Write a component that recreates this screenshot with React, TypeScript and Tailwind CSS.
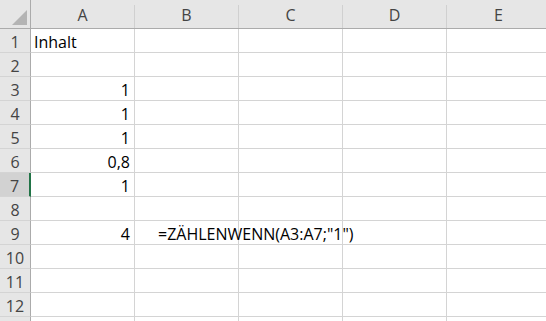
import React from 'react';

const cols = ['A', 'B', 'C', 'D', 'E'];

// row number -> [A, B]
const data: Record<number, { a?: string; aRight?: boolean; b?: string }> = {
    1: { a: 'Inhalt' },
    3: { a: '1', aRight: true },
    4: { a: '1', aRight: true },
    5: { a: '1', aRight: true },
    6: { a: '0,8', aRight: true },
    7: { a: '1', aRight: true },
    9: { a: '4', aRight: true, b: '=ZÄHLENWENN(A3:A7;"1")' },
};

const rows = Array.from({ length: 13 }, (_, i) => i + 1);

export default function App() {
    return (
        <div
            className="w-[546px] h-[321px] overflow-hidden bg-white text-[16px] text-black"
            style={{ fontFamily: '"Open Sans", "Liberation Sans", sans-serif' }}
        >
            <div className="grid grid-cols-[31px_104px_104px_104px_104px_104px] grid-rows-[29px] auto-rows-[24px]">
                {/* corner */}
                <div className="bg-[#e6e6e6] border-r border-b border-[#ababab] relative">
                    <svg className="absolute left-0 top-0" width="31" height="29" viewBox="0 0 31 29">
                        <polygon points="12,25 27,10 27,25" fill="#b4b4b4" />
                    </svg>
                </div>
                {cols.map(c => (
                    <div key={c} className="bg-[#e6e6e6] border-b border-[#ababab] flex items-end">
                        <div className="flex-1 h-full flex items-center justify-center text-[#444] pt-[2px]">{c}</div>
                        <div className="w-px h-[23px] bg-[#d0d0d0]" />
                    </div>
                ))}

                {rows.map(r => {
                    const d = data[r] || {};
                    const sel = r === 7;
                    return (
                        <React.Fragment key={r}>
                            <div
                                className={`flex items-center justify-center border-b border-[#d4d4d4] text-[#444] pt-[2px] ${sel ? 'bg-[#d2d2d2] border-r-2 border-r-[#217346]' : 'bg-[#e6e6e6] border-r border-r-[#ababab]'}`}
                            >
                                {r < 13 ? r : ''}
                            </div>
                            <div
                                className={`flex items-center border-r border-b border-[#d4d4d4] whitespace-nowrap pt-[2px] ${d.aRight ? 'justify-end pr-[4px]' : 'pl-[3px]'}`}
                            >
                                {d.a}
                            </div>
                            <div className="flex items-center border-r border-b border-[#d4d4d4] whitespace-nowrap pt-[2px] pl-[23px] overflow-visible relative z-10">
                                {d.b}
                            </div>
                            <div className="border-r border-b border-[#d4d4d4]" />
                            <div className="border-r border-b border-[#d4d4d4]" />
                            <div className="border-r border-b border-[#d4d4d4]" />
                        </React.Fragment>
                    );
                })}
            </div>
        </div>
    );
}
